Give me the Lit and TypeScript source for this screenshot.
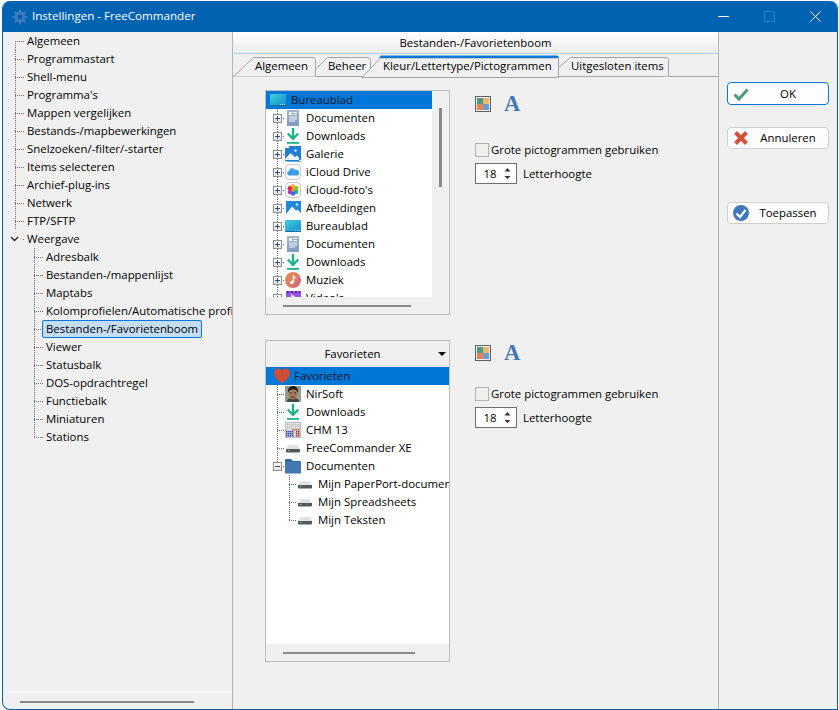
import { LitElement, html, css, svg } from "lit";
import { customElement } from "lit/decorators.js";

const IC: Record<string, any> = {
  monitor: svg`<defs><linearGradient id="mg" x1="0" y1="0" x2="1" y2="1"><stop offset="0" stop-color="#3fd0e0"/><stop offset="1" stop-color="#1590cf"/></linearGradient></defs><rect x="0" y="2" width="16" height="11" rx="1" fill="url(#mg)"/><rect x="0" y="13" width="16" height="1" fill="#0f6f9f"/><path d="M10 12.500h1M12 12.500h1M14 12.500h1" stroke="#fff" stroke-width=".7"/>`,
  doc: svg`<defs><linearGradient id="dg" x1="0" y1="0" x2="0" y2="1"><stop offset="0" stop-color="#a3b6cf"/><stop offset="1" stop-color="#7f9bbd"/></linearGradient></defs><rect x="2" y="0" width="12" height="16" fill="url(#dg)"/><rect x="4" y="2" width="3" height="3" fill="#eef3f8"/><path d="M8 2.500h4M8 4.500h4M4 7h8M4 9h8M4 11h6" stroke="#eef3f8" stroke-width="1"/>`,
  dl: svg`<path d="M8 0v10" stroke="#1bb18c" stroke-width="2.400"/><path d="M2.800 5.500 8 10.800l5.200-5.300" fill="none" stroke="#1bb18c" stroke-width="2.400"/><rect x="2" y="14" width="12" height="1.800" fill="#1bb18c"/>`,
  gal: svg`<rect x="4" y="0" width="12" height="14" fill="#1f7fd0"/><rect x="0" y="2" width="14" height="13" fill="#1f7fd0"/><path d="M0 13 5.500 7 10 11l2-1.500L14 12v2H0z" fill="#eaf4fc"/><circle cx="10.500" cy="4.500" r="1.200" fill="#cfe6f8"/><rect x="2" y="15" width="14" height="1" fill="#6ca7d8"/>`,
  pic: svg`<rect x="1" y="1" width="15" height="14" fill="#1f88d8"/><path d="M1 14 7 6.500l4 4 1.500-1L16 13v2H1z" fill="#f2f8fd"/><circle cx="12" cy="4.500" r="1.200" fill="#cfe6f8"/>`,
  cloud: svg`<rect x=".5" y=".5" width="15" height="15" rx="3.500" fill="#f8f8f8" stroke="#c9c9c9"/><path d="M4 11.500a2.300 2.300 0 0 1 0-4.500 3.200 3.200 0 0 1 6-1 2.800 2.800 0 0 1 2.200 5.500z" fill="#3d9be9"/>`,
  photos: svg`<rect x=".5" y=".5" width="15" height="15" rx="3.500" fill="#f8f8f8" stroke="#c9c9c9"/><circle cx="8" cy="4.500" r="2.200" fill="#f4b010"/><circle cx="11.200" cy="6.200" r="2.200" fill="#8cc820"/><circle cx="11" cy="10" r="2.200" fill="#20b090"/><circle cx="8" cy="11.500" r="2.200" fill="#3a6fe0"/><circle cx="5" cy="10" r="2.200" fill="#a040c8"/><circle cx="4.800" cy="6.200" r="2.200" fill="#e82840"/><circle cx="8" cy="8" r="1.500" fill="#f08020"/>`,
  music: svg`<defs><linearGradient id="mu" x1="0" y1="0" x2="1" y2="1"><stop offset="0" stop-color="#e8964c"/><stop offset="1" stop-color="#d0607c"/></linearGradient></defs><circle cx="8" cy="8" r="8" fill="url(#mu)"/><path d="M8.500 3.500v6.500" stroke="#fff" stroke-width="1.400"/><path d="M8.500 3.500c.5 1.500 2.500 1.500 2.500 3" fill="none" stroke="#fff" stroke-width="1"/><circle cx="6.800" cy="10.500" r="1.800" fill="#fff"/>`,
  video: svg`<rect x="1" y="1" width="15" height="14" fill="#9a55e0"/><path d="M6 4v8l6-4z" fill="#e9dcfa"/><path d="M2 1h2v2H2zM6 1h2v2H6zM10 1h2v2h-2zM14 1h1v2h-1z" fill="#5a2a98"/>`,
  heart: svg`<path d="M8 15.500C3 11.500 0 9 0 5a4.200 4.200 0 0 1 8-2 4.200 4.200 0 0 1 8 2c0 4-3 6.500-8 10.500z" fill="#cf4d35"/>`,
  face: svg`<rect width="16" height="16" fill="#8f9c90"/><path d="M2 16c0-3 2-4 6-4s6 1 6 4z" fill="#3d4a3f"/><ellipse cx="8" cy="7.500" rx="4.500" ry="6" fill="#a87a55"/><path d="M3 7C2.500 2 5 0 8 0s5.500 2 5 7c-1-2-1.500-3.500-5-3.500S4 5 3 7z" fill="#1d1b18"/><path d="M5 7h2M9 7h2" stroke="#2b1c12" stroke-width="1"/><path d="M6 11h4" stroke="#5a3520" stroke-width="1"/>`,
  chm: svg`<rect width="16" height="16" fill="#bdbdbd"/>${Array.from({ length: 49 }, (_, i) => {
    const x = i % 7, y = Math.floor(i / 7);
    const c = y > 3 && x < 4 ? "#2a45c8" : y > 3 && x > 4 ? "#c82a2a" : y === 3 && x > 2 ? "#d06a6a" : "#f8f8f8";
    return svg`<rect x=${1 + x * 2} y=${1 + y * 2} width="1.300" height="1.300" fill=${c}/>`;
  })}`,
  drive: svg`<path d="M3.500 5h9L15 9H1z" fill="#e2e2e2"/><path d="M1 9h14v2.500a1 1 0 0 1-1 1H2a1 1 0 0 1-1-1z" fill="#55585c"/><rect x="3" y="10" width="1.500" height="1" fill="#62d06a"/>`,
  folder: svg`<path d="M0 2a1 1 0 0 1 1-1h5l2 2h7a1 1 0 0 1 1 1v11H0z" fill="#2f69a8"/><rect x="0" y="4" width="16" height="11.500" fill="#4379b3"/>`,
};

const icon = (n: string) => html`<svg class="ic" viewBox="0 0 16 16">${IC[n]}</svg>`;

const TOP = ["Algemeen", "Programmastart", "Shell-menu", "Programma's", "Mappen vergelijken", "Bestands-/mapbewerkingen", "Snelzoeken/-filter/-starter", "Items selecteren", "Archief-plug-ins", "Netwerk", "FTP/SFTP"];
const SUB = ["Adresbalk", "Bestanden-/mappenlijst", "Maptabs", "Kolomprofielen/Automatische profielen", "Bestanden-/Favorietenboom", "Viewer", "Statusbalk", "DOS-opdrachtregel", "Functiebalk", "Miniaturen", "Stations"];
const TREE1: [string, string][] = [["doc", "Documenten"], ["dl", "Downloads"], ["gal", "Galerie"], ["cloud", "iCloud Drive"], ["photos", "iCloud-foto's"], ["pic", "Afbeeldingen"], ["monitor", "Bureaublad"], ["doc", "Documenten"], ["dl", "Downloads"], ["music", "Muziek"], ["video", "Video's"]];
const TREE2: [string, string][] = [["face", "NirSoft"], ["dl", "Downloads"], ["chm", "CHM 13"], ["drive", "FreeCommander XE"]];
const TREE3 = ["Mijn PaperPort-documenten", "Mijn Spreadsheets", "Mijn Teksten"];

@customElement("app-root")
export class AppRoot extends LitElement {
  static styles = css`
    :host { display: block; width: 839px; height: 710px; background: #fff; font: 11.4px/18px "Open Sans", "Noto Sans", sans-serif; color: #000; overflow: hidden; }
    * { box-sizing: border-box; }
    .win { margin: 1px 1px 0 2px; border: 1px solid #0063b1; border-top: 0; border-radius: 8px 8px 0 8px; background: #f0f0f0; display: flex; flex-direction: column; overflow: hidden; height: 709px; }
    .title { height: 31px; flex: none; background: #0063b1; color: #fff; display: flex; align-items: center; padding-left: 9px; }
    .title .gear { width: 16px; height: 16px; margin-right: 4px; }
    .title .t { flex: 1; padding-bottom: 1px; font-size: 11.6px; }
    .ctl { width: 46px; display: flex; justify-content: center; }
    .ctl svg { width: 11px; height: 11px; display: block; }
    .ctls { display: flex; margin-right: -1px; }
    .body { flex: 1; display: flex; min-height: 0; }
    .side { width: 230px; flex: none; border-right: 1px solid #b4b4b4; display: flex; flex-direction: column; overflow: hidden; }
    .stree { flex: 1; min-height: 0; white-space: nowrap; overflow: hidden; }
    .sbar { height: 17px; flex: none; border-top: 1px solid #fff; display: flex; padding: 8px 0 0 17px; }
    .bar { height: 2px; background: #8a8a8a; }
    .bar.w1 { width: 174px; }
    .row { height: 18px; display: flex; align-items: stretch; white-space: nowrap; }
    .top { padding-left: 12px; }
    .sub { padding-left: 31px; }
    .slot { flex: none; width: 10px; background-image: repeating-linear-gradient(to bottom, #6e6e6e 0 1px, transparent 1px 2px), repeating-linear-gradient(to right, #6e6e6e 0 1px, transparent 1px 2px); background-repeat: no-repeat; background-position: 0 0, 0 9px; background-size: 1px 100%, 100% 1px; }
    .slot.end { background-size: 1px 10px, 100% 1px; }
    .slot.start { background-position: 0 9px, 0 9px; background-size: 1px 9px, 100% 1px; }
    .lab { margin-left: -2px; padding: 0 3px; border: 1px solid transparent; border-radius: 2px; line-height: 15px; }
    .lab.sel { background: #c4ddf4; border-color: #0078d7; }
    .chev { width: 9px; margin-left: -5px; flex: none; display: flex; align-items: center; }
    .chev svg { width: 9px; height: 6px; display: block; }
    .dash { width: 2px; margin-left: 4px; flex: none; background: repeating-linear-gradient(to right, #6e6e6e 0 1px, transparent 1px 2px) 0 9px / 100% 1px no-repeat; }
    .main { width: 486px; flex: none; border-right: 1px solid #b4b4b4; display: flex; flex-direction: column; }
    .head { height: 22px; flex: none; text-align: center; line-height: 21px; background: linear-gradient(#fff, #ececec); border-bottom: 1px solid #b4cfe9; }
    .tabs { height: 23px; flex: none; display: flex; border-bottom: 1px solid #a8a8a8; }
    .tab { position: relative; height: 23px; line-height: 24px; flex: none; z-index: 0; white-space: nowrap; }
    .tab svg { position: absolute; left: 0; top: 0; width: 100%; height: 23px; overflow: visible; z-index: -1; }
    .tab.a { width: 83px; padding-left: 22px; }
    .tab.b { width: 64px; padding-left: 12px; }
    .tab.c { width: 178px; padding-left: 3px; z-index: 1; }
    .tab.d { width: 111px; padding-left: 13px; }
    .content { flex: 1; padding: 13px 0 0 32px; display: flex; flex-direction: column; gap: 25px; }
    .sec { display: flex; gap: 25px; }
    .box { width: 185px; border: 1px solid #bcbcbc; display: flex; flex-direction: column; }
    .box.b1 { height: 225px; }
    .box.b2 { height: 322px; }
    .mid { flex: 1; display: flex; min-height: 0; }
    .white { flex: 1; min-width: 0; background: #fff; overflow: hidden; }
    .vs { width: 17px; flex: none; padding: 17px 0 0 7px; }
    .vs div { width: 3px; height: 79px; background: #8a8a8a; }
    .hs { height: 17px; flex: none; padding: 8px 0 0 17px; }
    .hs .bar { width: 128px; }
    .b2 .hs .bar { width: 132px; }
    .selrow { height: 18px; background: #0078d7; display: flex; align-items: center; color: #04162a; }
    .selrow.s1 { padding-left: 4px; }
    .selrow.s2 { padding-left: 8px; }
    .selrow .ic { margin-right: 4px; }
    .selrow.s1 .ic { margin-right: 5px; }
    .b1 .selrow { width: 166px; }
    .white span { line-height: 17px; padding-bottom: 1px; }
    .trow { height: 18px; display: flex; align-items: center; white-space: nowrap; padding-left: 7px; }
    .gut { flex: none; align-self: stretch; width: 12px; display: flex; align-items: center; background-image: repeating-linear-gradient(to bottom, #6e6e6e 0 1px, transparent 1px 2px), repeating-linear-gradient(to right, #6e6e6e 0 1px, transparent 1px 2px); background-repeat: no-repeat; background-position: 4px 0, 4px 9px; background-size: 1px 100%, 8px 1px; }
    .gut.stop { background-size: 1px 10px, 8px 1px; }
    .ex { width: 9px; height: 9px; border: 1px solid #8f8f8f; background: linear-gradient(#fff, #e4e4e4); position: relative; }
    .ex svg { position: absolute; left: 1px; top: 1px; width: 5px; height: 5px; display: block; }
    .ic { width: 16px; height: 16px; flex: none; display: block; margin-right: 5px; }
    .deep { padding-left: 19px; }
    .combo { height: 26px; flex: none; display: flex; align-items: center; justify-content: center; position: relative; padding-right: 10px; }
    .combo i { position: absolute; right: 3px; top: 11px; width: 0; height: 0; border: 4px solid transparent; border-top: 4px solid #000; border-bottom: 0; }
    .opt { width: 200px; display: flex; flex-direction: column; }
    .icons { display: flex; align-items: center; gap: 13px; height: 16px; }
    .o1 { padding-top: 6px; }
    .o2 { padding-top: 5px; }
    .swatch { width: 16px; height: 16px; display: block; }
    .bigA { font: bold 22.500px/16px "Liberation Serif", serif; color: #4278b6; }
    .chk { display: flex; align-items: center; gap: 2px; height: 18px; white-space: nowrap; }
    .o1 .chk { margin-top: 29px; }
    .o2 .chk { margin-top: 24px; }
    .cb { width: 14px; height: 14px; border: 1px solid #b2b2b2; background: #f0f0f0; }
    .spinrow { display: flex; align-items: center; gap: 6px; margin-top: 4px; }
    .spin { width: 42px; height: 21px; border: 1px solid #6e6e6e; background: #fff; display: flex; align-items: center; }
    .spin span { width: 28px; text-align: center; }
    .spin svg { width: 7px; height: 15px; display: block; }
    .btns { flex: 1; display: flex; flex-direction: column; padding: 50px 0 0 8px; }
    .btn { width: 102px; height: 22px; background: #fdfdfd; border: 1px solid #cfcfcf; border-radius: 4px; display: flex; align-items: center; padding-left: 5px; }
    .btn.ok { border-color: #0078d7; height: 23px; }
    .btn svg { width: 16px; height: 16px; flex: none; }
    .btn span { flex: 1; text-align: center; padding: 0 6px 0 5px; }
    .btn.cancel { margin-top: 22px; }
    .btn.apply { margin-top: 53px; }
  `;

  render() {
    return html`<div class="win">
      <div class="title">
        <svg class="gear" viewBox="0 0 16 16"><path d="M8 2.500a5.500 5.500 0 1 0 0 11 5.500 5.500 0 0 0 0-11zm0 3a2.500 2.500 0 1 1 0 5 2.500 2.500 0 0 1 0-5z" fill="#3b7cb9"/><path d="M8 .5v3M8 12.500v3M.5 8h3M12.500 8h3M2.700 2.700l2.100 2.100M11.200 11.200l2.100 2.100M2.700 13.300l2.100-2.100M11.200 4.800l2.100-2.100" stroke="#3b7cb9" stroke-width="2.200"/></svg>
        <span class="t">Instellingen - FreeCommander</span>
        <div class="ctls">
          <div class="ctl"><svg viewBox="0 0 11 11"><path d="M0 5.500h11" stroke="#fff"/></svg></div>
          <div class="ctl"><svg viewBox="0 0 11 11"><rect x=".5" y=".5" width="10" height="10" fill="none" stroke="#2c7fc2"/></svg></div>
          <div class="ctl"><svg viewBox="0 0 11 11"><path d="M.5.500l10 10M10.500.500l-10 10" stroke="#fff"/></svg></div>
        </div>
      </div>
      <div class="body">
        <div class="side">
          <div class="stree">
            ${TOP.map((t, i) => html`<div class="row top"><div class="slot ${i === 0 ? "start" : ""}"></div><div class="lab">${t}</div></div>`)}
            <div class="row top"><div class="chev"><svg viewBox="0 0 9 6"><path d="M1 1l3.500 3.500L8 1" fill="none" stroke="#222" stroke-width="1.300"/></svg></div><div class="dash"></div><div class="lab">Weergave</div></div>
            ${SUB.map((t, i) => html`<div class="row sub"><div class="slot ${i === SUB.length - 1 ? "end" : ""}"></div><div class="lab ${i === 4 ? "sel" : ""}">${t}</div></div>`)}
          </div>
          <div class="sbar"><div class="bar w1"></div></div>
        </div>
        <div class="main">
          <div class="head">Bestanden-/Favorietenboom</div>
          <div class="tabs">
            <div class="tab a"><svg viewBox="0 0 83 23" preserveAspectRatio="none"><path d="M.5 22.500 20.500 3.500H80q2 0 2.500 2v17" fill="#f0f0f0" stroke="#a4a4a4"/></svg>Algemeen</div>
            <div class="tab b"><svg viewBox="0 0 64 23" preserveAspectRatio="none"><path d="M.5 14.500 11.500 3.500H52q2 0 2.500 2v17H.5" fill="#f0f0f0" stroke="#a4a4a4"/></svg>Beheer</div>
            <div class="tab c"><svg viewBox="0 0 178 23" preserveAspectRatio="none"><path d="M-18 23.500 .5 4H178.500V23.500z" fill="#f0f0f0" stroke="#a4a4a4"/><path d="M-1 4 1 1.500H177l1.500 1V4z" fill="#0078d7"/></svg>Kleur/Lettertype/Pictogrammen</div>
            <div class="tab d"><svg viewBox="0 0 111 23" preserveAspectRatio="none"><path d="M.5 13.500 12.500 3.500H108q2 0 2.500 2v17" fill="#f0f0f0" stroke="#a4a4a4"/></svg>Uitgesloten items</div>
          </div>
          <div class="content">
            <div class="sec">
              <div class="box b1">
                <div class="mid">
                  <div class="white">
                    <div class="selrow s1">${icon("monitor")}<span>Bureaublad</span></div>
                    ${TREE1.map(([ic, t]) => html`<div class="trow"><div class="gut"><div class="ex"><svg viewBox="0 0 5 5"><path d="M0 2.500h5M2.500 0v5" stroke="#34508a"/></svg></div></div>${icon(ic)}<span>${t}</span></div>`)}
                  </div>
                  <div class="vs"><div></div></div>
                </div>
                <div class="hs"><div class="bar"></div></div>
              </div>
              ${this.options("o1")}
            </div>
            <div class="sec">
              <div class="box b2">
                <div class="combo">Favorieten<i></i></div>
                <div class="white">
                  <div class="selrow s2">${icon("heart")}<span>Favorieten</span></div>
                  ${TREE2.map(([ic, t]) => html`<div class="trow"><div class="gut"></div>${icon(ic)}<span>${t}</span></div>`)}
                  <div class="trow"><div class="gut stop"><div class="ex"><svg viewBox="0 0 5 5"><path d="M0 2.500h5" stroke="#34508a"/></svg></div></div>${icon("folder")}<span>Documenten</span></div>
                  ${TREE3.map((t, i) => html`<div class="trow deep"><div class="gut ${i === 2 ? "stop" : ""}"></div>${icon("drive")}<span>${t}</span></div>`)}
                </div>
                <div class="hs"><div class="bar"></div></div>
              </div>
              ${this.options("o2")}
            </div>
          </div>
        </div>
        <div class="btns">
          <div class="btn ok"><svg viewBox="0 0 16 16"><path d="M1.500 8.500 6 13 14.500 3.500" fill="none" stroke="#4c9a7f" stroke-width="3"/></svg><span>OK</span></div>
          <div class="btn cancel"><svg viewBox="0 0 16 16"><path d="M2.500 2.500l11 11M13.500 2.500l-11 11" stroke="#d2513a" stroke-width="4"/></svg><span>Annuleren</span></div>
          <div class="btn apply"><svg viewBox="0 0 16 16"><circle cx="8" cy="8" r="8" fill="#3f78b8"/><path d="M3.500 8.500 7 12l5.500-7" fill="none" stroke="#fff" stroke-width="2.200"/></svg><span>Toepassen</span></div>
        </div>
      </div>
    </div>`;
  }

  options(cls: string) {
    return html`<div class="opt ${cls}">
      <div class="icons">
        <svg class="swatch" viewBox="0 0 16 16"><rect x=".5" y=".5" width="15" height="15" fill="#f2f2f2" stroke="#5f5f5f"/><rect x="2" y="2" width="6" height="6" fill="#4d9a80"/><rect x="8" y="2" width="6" height="6" fill="#ecb666"/><rect x="2" y="8" width="6" height="6" fill="#e9824f"/><rect x="8" y="8" width="6" height="6" fill="#679ed8"/></svg>
        <span class="bigA">A</span>
      </div>
      <div class="chk"><div class="cb"></div><span>Grote pictogrammen gebruiken</span></div>
      <div class="spinrow"><div class="spin"><span>18</span><svg viewBox="0 0 7 15"><path d="M3.500 2 6.500 5.500H.5zM.5 10h6L3.500 13z" fill="#333"/></svg></div><span>Letterhoogte</span></div>
    </div>`;
  }
}
